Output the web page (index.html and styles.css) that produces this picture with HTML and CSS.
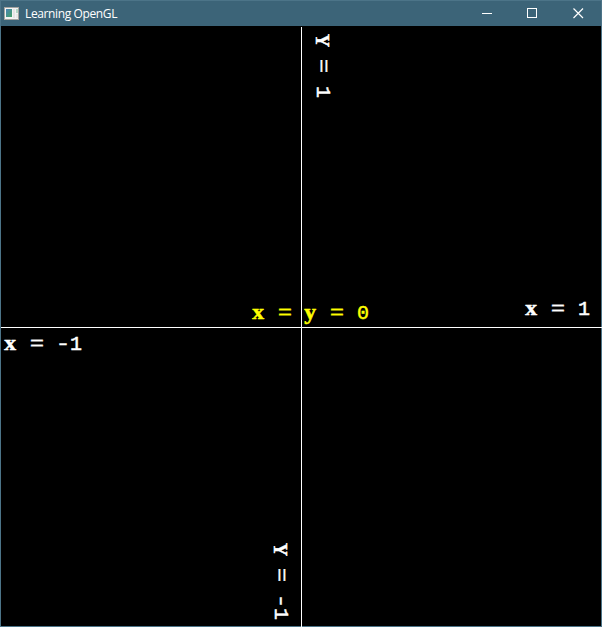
FILE: index.html
```html
<!DOCTYPE html>
<html lang="en">
<head>
<meta charset="utf-8">
<title>Learning OpenGL</title>
<link rel="stylesheet" href="styles.css">
</head>
<body>
<div class="window">
  <header class="titlebar">
    <svg class="app-icon" width="16" height="14" viewBox="0 0 16 14">
      <defs><linearGradient id="g" x1="0" y1="0" x2="1" y2="1"><stop offset="0" stop-color="#4a83b5"/><stop offset="1" stop-color="#43a266"/></linearGradient></defs>
      <rect x="0.5" y="0.5" width="14" height="12" fill="#f3f3f3" stroke="#a4a4a0"/>
      <rect x="2" y="2" width="6" height="8" fill="url(#g)"/>
      <rect x="9" y="2" width="2" height="9" fill="#e4e4e4"/>
      <rect x="12" y="2" width="2" height="4" fill="#b5d8c6"/>
      <rect x="12" y="7" width="2" height="4" fill="#e8e8e8"/>
    </svg>
    <span class="title">Learning OpenGL</span>
    <div class="controls">
      <svg width="46" height="25" viewBox="0 0 46 25"><path d="M18 12.500H28"/></svg>
      <svg width="46" height="25" viewBox="0 0 46 25"><rect x="17.500" y="7.500" width="9" height="9"/></svg>
      <svg width="46" height="25" viewBox="0 0 46 25"><path class="close" d="M17.500 7.500L27 17M27 7.500L17.500 17"/></svg>
    </div>
  </header>
  <main class="scene">
    <div class="axis axis-y"></div>
    <div class="axis axis-x"></div>
    <div class="label origin"><span class="letter">x</span> <span class="equals">=</span> <span class="letter">y</span> <span class="equals">=</span> 0</div>
    <div class="label right"><span class="letter">x</span> <span class="equals">=</span> 1</div>
    <div class="label left"><span class="letter">x</span> <span class="equals">=</span> <span class="minus">-</span>1</div>
    <div class="label upright top"><span class="letter">Y</span> <span class="equals">=</span> 1</div>
    <div class="label upright bottom"><span class="letter">Y</span> <span class="equals">=</span> <span class="minus">-</span>1</div>
  </main>
</div>
</body>
</html>
```
FILE: styles.css
```css
* { box-sizing: border-box; }
body { margin: 0; background: #000; }
.window {
  width: 602px;
  height: 627px;
  border: 1px solid #4c7488;
  background: #000;
  display: flex;
  flex-direction: column;
}
.titlebar {
  height: 25px;
  flex: none;
  display: flex;
  align-items: center;
  padding-left: 3px;
  background: #3c6478;
  color: #fff;
}
.app-icon { flex: none; margin-right: 5px; }
.title {
  flex: 1;
  font: 12px/24px "Open Sans", "Noto Sans", sans-serif;
  letter-spacing: -0.38px;
  white-space: nowrap;
}
.controls { display: flex; margin-right: -1px; }
.controls svg { fill: none; stroke: #fff; stroke-width: 1; }
.controls .close { stroke-width: 1.2; }
.scene { position: relative; flex: 1; }
.axis { position: absolute; background: #fff; }
.axis-y { left: 300px; top: 1px; bottom: -1px; width: 1px; }
.axis-x { top: 301px; left: 0; right: -1px; height: 1px; }
.label {
  position: absolute;
  font: 20px/24px "Liberation Mono", monospace;
  letter-spacing: 1px;
  -webkit-text-stroke: 0.5px currentColor;
  color: #fff;
  white-space: pre;
}
.letter, .equals, .minus {
  display: inline-block;
  inline-size: 13px;
  letter-spacing: 0;
}
.letter {
  font: bold 21px/24px "Liberation Serif", serif;
  -webkit-text-stroke: 0.5px currentColor;
  transform: scaleX(1.12);
}
.equals { transform: scaleX(1.2); -webkit-text-stroke: 0.3px currentColor; }
.minus { transform: scaleX(1.25); -webkit-text-stroke: 0.4px currentColor; }
.origin { left: 252px; top: 274px; color: #ff0; }
.right { left: 525px; top: 270px; }
.left { left: 4px; top: 305px; }
.upright { writing-mode: vertical-rl; }
.upright .letter { font-size: 18px; transform: none; }
.upright .equals { transform: scaleY(1.2); }
.upright .minus { transform: scaleY(1.25); }
.top { left: 309px; top: 8px; }
.bottom { left: 267px; top: 517px; }
```
